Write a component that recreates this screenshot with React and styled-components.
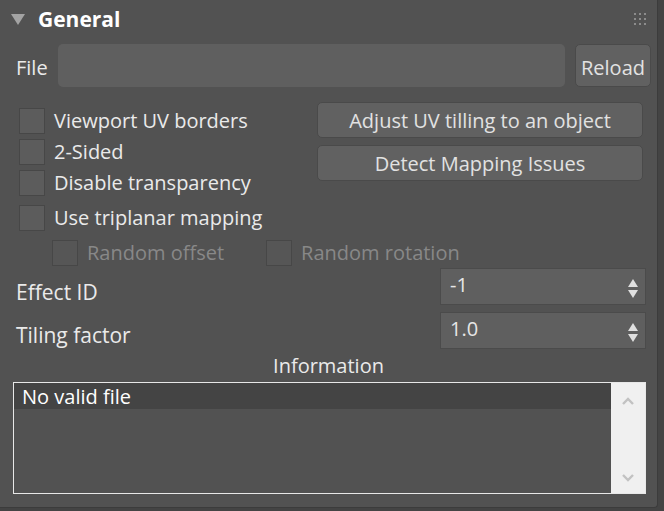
import React from "react";
import styled, { createGlobalStyle } from "styled-components";

// BEGIN STYLING

const GlobalStyle = createGlobalStyle`
  html, body {
    margin: 0;
    padding: 0;
    background: #444444;
  }
  body {
    font-family: "Open Sans", "Noto Sans", "Liberation Sans", sans-serif;
    color: #e6e6e6;
  }
`
const SCPanel = styled.div`
  width: 658px;
  height: 508px;
  background: #525252;
  border-right: 1px solid #3c3c3c;
  border-bottom: 1px solid #3c3c3c;
  border-bottom-right-radius: 4px;
  box-sizing: border-box;
`
const SCHeader = styled.header`
  display: flex;
  align-items: center;
  height: 38px;
  padding: 0 11px;
`
const SCTitle = styled.h1`
  margin: 0 0 0 13px;
  font-size: 21px;
  font-weight: 700;
  color: #ffffff;
`
const SCGrip = styled.div`
  margin-left: auto;
  display: grid;
  grid-template-columns: repeat(3, 2px);
  grid-auto-rows: 2px;
  gap: 3px;
  div {
    background: #8c8c8c;
  }
`
const SCFileRow = styled.div`
  display: flex;
  align-items: center;
  margin-top: 6px;
  padding: 0 6px 0 16px;
  height: 43px;
  > span {
    padding-top: 3px;
  }
`
const SCLabel = styled.span`
  font-size: 20px;
  color: ${props => props.dim ? "#888888" : "#eaeaea"};
  white-space: nowrap;
`
const SCInput = styled.div`
  flex: 1;
  height: 43px;
  margin: 0 10px 0 10px;
  background: #5f5f5f;
  border-radius: 5px;
`
const SCButton = styled.button`
  height: ${props => props.h || 36}px;
  width: ${props => props.w ? props.w + "px" : "100%"};
  background: #616161;
  border: 1px solid #4a4a4a;
  border-radius: 5px;
  color: #e2e2e2;
  font-family: inherit;
  font-size: 20px;
  padding: ${props => props.h ? "3px 0 0" : "0"};
  cursor: pointer;
`
const SCOptions = styled.div`
  display: flex;
  margin-top: 15px;
  padding: 0 14px 0 19px;
`
const SCChecks = styled.div`
  display: flex;
  flex-direction: column;
  padding-top: 3px;
`
const SCCheckRow = styled.label`
  display: flex;
  align-items: center;
  height: 31px;
  margin-top: ${props => props.gap || 0}px;
  gap: 9px;
`
const SCBox = styled.span`
  width: 26px;
  height: 26px;
  box-sizing: border-box;
  background: ${props => props.dim ? "#565656" : "#5c5c5c"};
  border: 1px solid #474747;
`
const SCActions = styled.div`
  margin-left: auto;
  width: 326px;
  display: flex;
  flex-direction: column;
  gap: 7px;
`
const SCSubRow = styled.div`
  display: flex;
  align-items: center;
  padding-left: 52px;
  margin-top: 4px;
  gap: 42px;
`
const SCParamRow = styled.div`
  display: flex;
  align-items: flex-start;
  height: 37px;
  padding: 0 11px 0 16px;
  margin-top: ${props => props.gap}px;
  ${SCLabel} {
    font-size: 21px;
    line-height: 28px;
    padding-top: ${props => props.labelTop}px;
  }
`
const SCSpinner = styled.div`
  margin-left: auto;
  width: 206px;
  height: 37px;
  box-sizing: border-box;
  background: #5f5f5f;
  border: 1px solid #4b4b4b;
  display: flex;
  align-items: flex-start;
  padding: 2px 6px 0 9px;
  font-size: 20px;
  color: #e6e6e6;
  span {
    flex: 1;
  }
  svg {
    margin-top: 7px;
  }
`
const SCInfoTitle = styled.div`
  text-align: center;
  font-size: 20px;
  margin-top: 3px;
  height: 28px;
  line-height: 28px;
  color: #eaeaea;
`
const SCInfoBox = styled.div`
  display: flex;
  margin: 2px 11px 0 13px;
  height: 112px;
  box-sizing: border-box;
  border: 1px solid #e8e8e8;
`
const SCList = styled.div`
  flex: 1;
  background: #525252;
`
const SCListItem = styled.div`
  height: 26px;
  background: #444444;
  padding: 1px 0 0 8px;
  box-sizing: border-box;
  font-size: 20px;
  line-height: 26px;
  color: #ffffff;
`
const SCScroll = styled.div`
  width: 34px;
  background: #f0f0f0;
  display: flex;
  flex-direction: column;
  justify-content: space-between;
  align-items: center;
  padding: 14px 0 11px;
`

// END STYLING

const Check = ({ label, gap }) => (
  <SCCheckRow gap={gap}>
    <SCBox />
    <SCLabel>{label}</SCLabel>
  </SCCheckRow>
)

const Arrows = () => (
  <svg width="12" height="21" viewBox="0 0 12 21">
    <path d="M6 1 L11 9 L1 9 Z" fill="#e0e0e0" />
    <path d="M1 12 L11 12 L6 20 Z" fill="#e0e0e0" />
  </svg>
)

const Chevron = ({ down }) => (
  <svg width="12" height="8" viewBox="0 0 12 8">
    <path
      d={down ? "M1 1 L6 6 L11 1" : "M1 7 L6 2 L11 7"}
      stroke="#c2c2c2"
      strokeWidth="2.4"
      fill="none"
    />
  </svg>
)

class App extends React.Component {
  render() {
    return (
      <SCPanel>
        <GlobalStyle />
        <SCHeader>
          <svg width="14" height="11" viewBox="0 0 14 11">
            <path d="M0 0 L14 0 L7 11 Z" fill="#a3a3a3" />
          </svg>
          <SCTitle>General</SCTitle>
          <SCGrip>
            {Array.from({ length: 9 }).map((_, i) => <div key={i} />)}
          </SCGrip>
        </SCHeader>

        <SCFileRow>
          <SCLabel>File</SCLabel>
          <SCInput />
          <SCButton w={76} h={43}>Reload</SCButton>
        </SCFileRow>

        <SCOptions>
          <SCChecks>
            <Check label="Viewport UV borders" />
            <Check label="2-Sided" />
            <Check label="Disable transparency" />
            <Check label="Use triplanar mapping" gap={4} />
          </SCChecks>
          <SCActions>
            <SCButton>Adjust UV tilling to an object</SCButton>
            <SCButton>Detect Mapping Issues</SCButton>
          </SCActions>
        </SCOptions>

        <SCSubRow>
          <SCCheckRow>
            <SCBox dim />
            <SCLabel dim>Random offset</SCLabel>
          </SCCheckRow>
          <SCCheckRow>
            <SCBox dim />
            <SCLabel dim>Random rotation</SCLabel>
          </SCCheckRow>
        </SCSubRow>

        <SCParamRow gap={0} labelTop={10}>
          <SCLabel>Effect ID</SCLabel>
          <SCSpinner>
            <span>-1</span>
            <Arrows />
          </SCSpinner>
        </SCParamRow>
        <SCParamRow gap={7} labelTop={9}>
          <SCLabel>Tiling factor</SCLabel>
          <SCSpinner>
            <span>1.0</span>
            <Arrows />
          </SCSpinner>
        </SCParamRow>

        <SCInfoTitle>Information</SCInfoTitle>
        <SCInfoBox>
          <SCList>
            <SCListItem>No valid file</SCListItem>
          </SCList>
          <SCScroll>
            <Chevron />
            <Chevron down />
          </SCScroll>
        </SCInfoBox>
      </SCPanel>
    );
  }
}

export default App;
